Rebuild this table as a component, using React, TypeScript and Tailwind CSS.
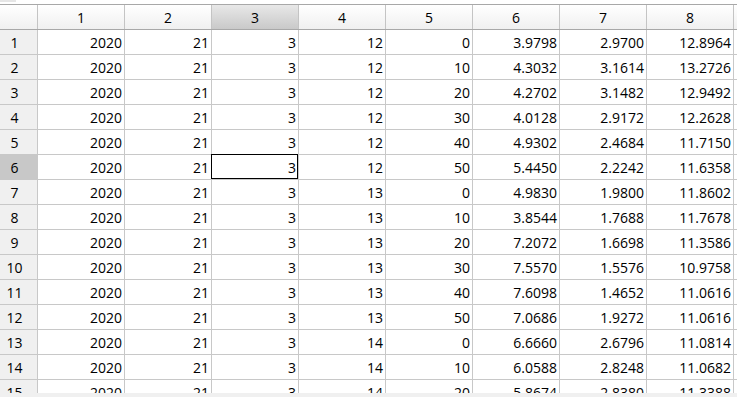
import React from "react";

const rows: (string | number)[][] = [
  [2020, 21, 3, 12, 0, "3.9798", "2.9700", "12.8964"],
  [2020, 21, 3, 12, 10, "4.3032", "3.1614", "13.2726"],
  [2020, 21, 3, 12, 20, "4.2702", "3.1482", "12.9492"],
  [2020, 21, 3, 12, 30, "4.0128", "2.9172", "12.2628"],
  [2020, 21, 3, 12, 40, "4.9302", "2.4684", "11.7150"],
  [2020, 21, 3, 12, 50, "5.4450", "2.2242", "11.6358"],
  [2020, 21, 3, 13, 0, "4.9830", "1.9800", "11.8602"],
  [2020, 21, 3, 13, 10, "3.8544", "1.7688", "11.7678"],
  [2020, 21, 3, 13, 20, "7.2072", "1.6698", "11.3586"],
  [2020, 21, 3, 13, 30, "7.5570", "1.5576", "10.9758"],
  [2020, 21, 3, 13, 40, "7.6098", "1.4652", "11.0616"],
  [2020, 21, 3, 13, 50, "7.0686", "1.9272", "11.0616"],
  [2020, 21, 3, 14, 0, "6.6660", "2.6796", "11.0814"],
  [2020, 21, 3, 14, 10, "6.0588", "2.8248", "11.0682"],
  [2020, 21, 3, 14, 20, "5.8674", "2.8380", "11.3388"],
];

const cols = [1, 2, 3, 4, 5, 6, 7, 8];
const selRow = 5;
const selCol = 2;

export default function App() {
  return (
    <div
      className="flex h-[397px] w-[737px] flex-col overflow-hidden bg-white text-[14px] text-black"
      style={{ fontFamily: '"Open Sans", "Noto Sans", sans-serif' }}
    >
      <div className="flex h-[4px] shrink-0">
        <div className="h-[2px] w-[16px] bg-[#e6e6e6]" />
      </div>

      {/* column headers */}
      <div className="flex h-[26px] shrink-0 border-y border-[#a8a8a8]">
        <div className="w-[38px] shrink-0 border-r border-[#c4c4c4] bg-linear-to-b from-white to-[#f0f0f0]" />
        {cols.map((c, i) => (
          <div
            key={c}
            className={
              i === selCol
                ? "flex w-[87px] shrink-0 items-center justify-center border-r border-[#c4c4c4] bg-linear-to-b from-[#e8e8e8] to-[#c9c9c9]"
                : "flex w-[87px] shrink-0 items-center justify-center border-r border-[#c4c4c4] bg-linear-to-b from-white to-[#f0f0f0]"
            }
          >
            {c}
          </div>
        ))}
        <div className="flex-1 bg-linear-to-b from-white to-[#f0f0f0]" />
      </div>

      {/* body */}
      <div className="flex-1 overflow-hidden">
        {rows.map((r, ri) => (
          <div key={ri} className="flex h-[25px] border-b border-[#c8c8c8]">
            <div
              className={
                ri === selRow
                  ? "flex w-[38px] shrink-0 items-center justify-center border-r border-[#c8c8c8] bg-[#c8c8c8] pr-[8px]"
                  : "flex w-[38px] shrink-0 items-center justify-center border-r border-[#c8c8c8] bg-[#f0f0f0] pr-[8px]"
              }
            >
              {ri + 1}
            </div>
            {r.map((v, ci) => (
              <div key={ci} className="relative flex w-[87px] shrink-0 items-center justify-end border-r border-[#c8c8c8] pr-[2px]">
                {v}
                {ri === selRow && ci === selCol && (
                  <span className="absolute -top-px -left-px right-0 bottom-0 border border-black" />
                )}
              </div>
            ))}
            <div className="flex-1" />
          </div>
        ))}
      </div>

      <div className="h-[4px] shrink-0 bg-[#f0f0f0]" />
    </div>
  );
}
